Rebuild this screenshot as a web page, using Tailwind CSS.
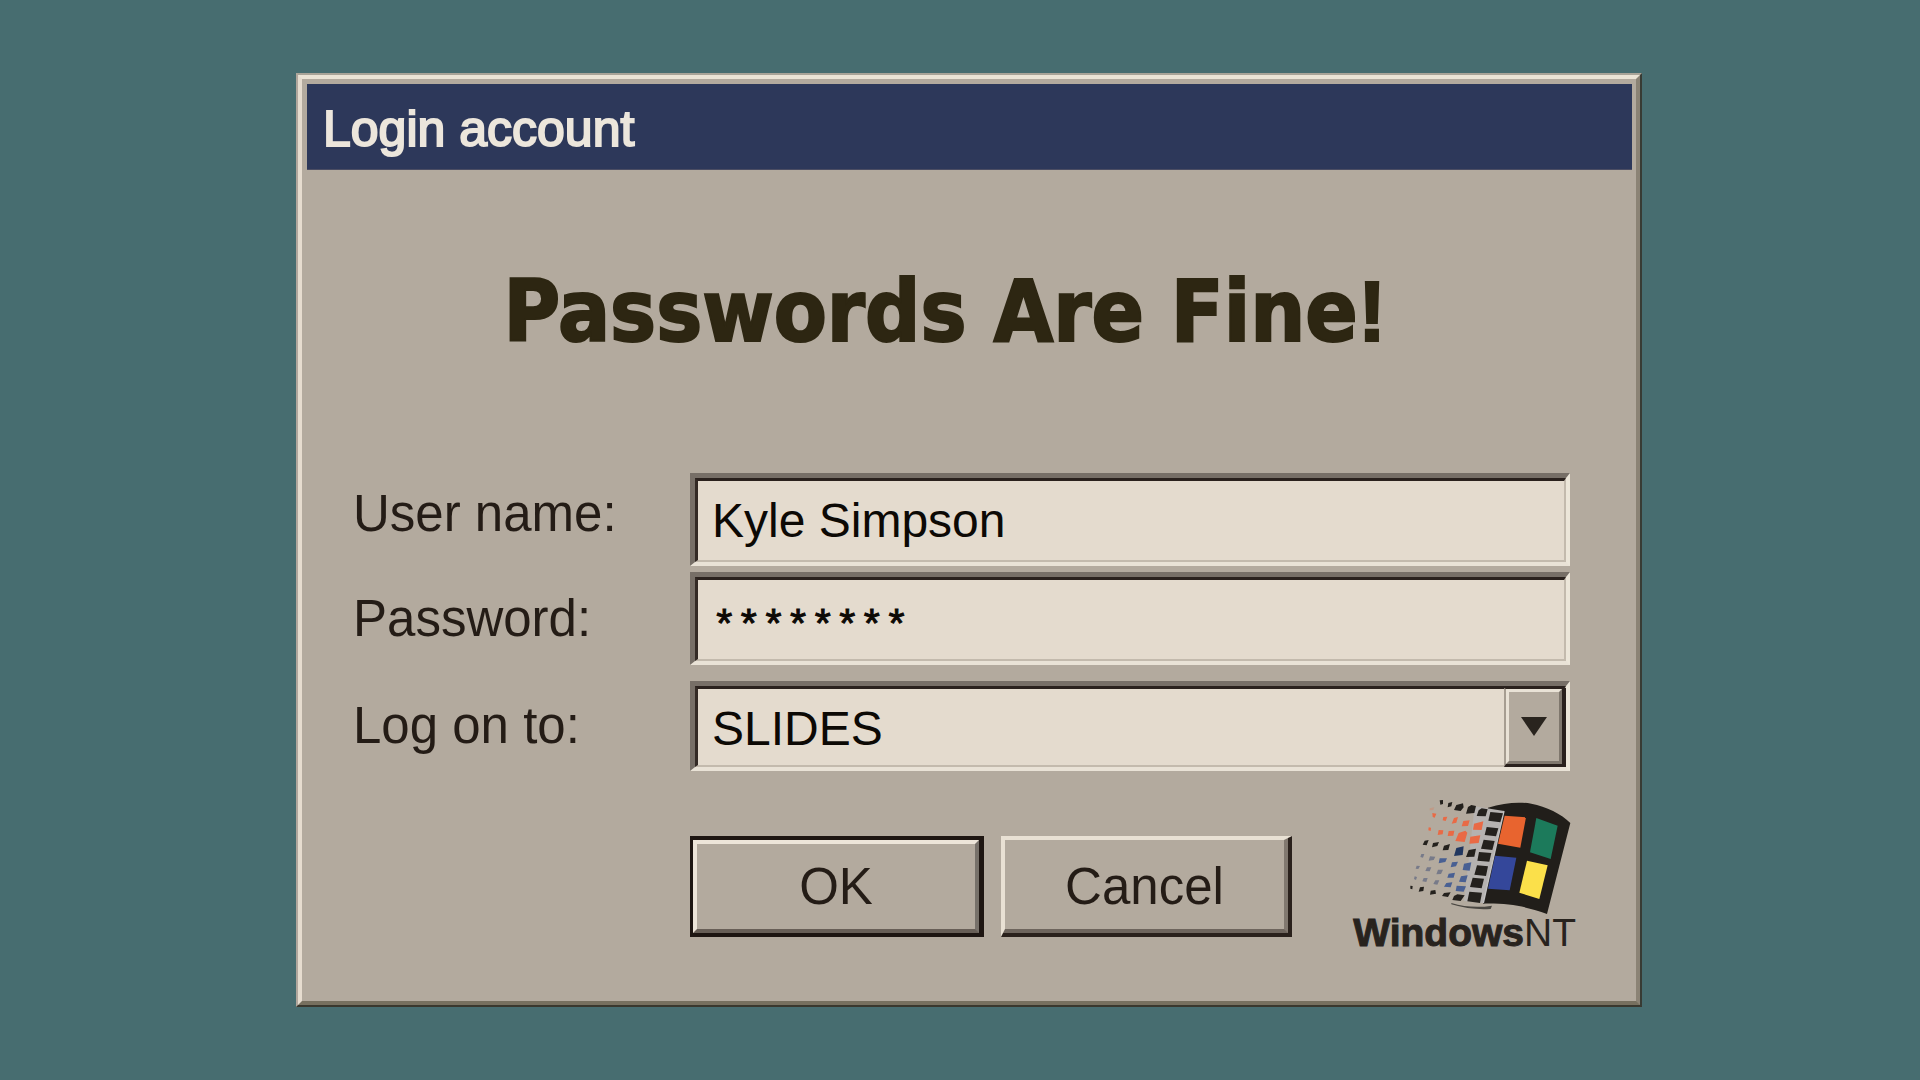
<!DOCTYPE html>
<html lang="en">
  <head>
    <meta charset="UTF-8" />
    <meta name="viewport" content="width=device-width, initial-scale=1.0" />
    <title>Login account</title>
    <script src="https://cdn.jsdelivr.net/npm/@tailwindcss/browser@4"></script>
  </head>
  <body
    class="min-h-screen flex items-center justify-center pl-[18px] bg-[#476d70] font-['Liberation_Sans',Arial,sans-serif] text-[51px] leading-[60px] text-[#241c16]"
  >
    <main
      class="w-full max-w-[1346px] border-2 border-t-[#a9a498] border-l-[#b1a79d] border-r-[#383b34] border-b-[#3a382e]"
    >
      <div
        class="bg-[#b3aa9e] border-4 border-t-[#ebe4d6] border-l-[#e6dccf] border-r-[#8b8375] border-b-[#77705f]"
      >
        <header
          class="mt-[5px] ml-[5px] mr-1 h-[86px] flex items-center pt-1 pl-4 bg-[#2d385a] border-b border-[#4b4d63]"
        >
          <h1 class="text-[50px] text-[#ece6dc] [-webkit-text-stroke:2px_#ece6dc]">Login account</h1>
        </header>

        <form class="pb-[50px]" onsubmit="return false">
          <h2
            class="mt-[97px] mr-[48px] text-center text-[86px] leading-[88px] font-bold text-[#2d2612] [-webkit-text-stroke:2px_#2d2612] font-['DejaVu_Sans_Condensed','DejaVu_Sans',sans-serif]"
          >
            Passwords Are Fine<span class="font-['Liberation_Sans',Arial,sans-serif]">!</span>
          </h2>

          <div class="mt-[118px] pl-[51px] pr-[66px]">
            <div class="flex items-center">
              <label for="username" class="w-[337px] pb-3">User name:</label>
              <div
                class="flex-1 h-[93px] flex border-t-5 border-l-5 border-r-4 border-b-4 border-t-[#776f67] border-l-[#776f67] border-r-[#ece6d9] border-b-[#e9e2d6]"
              >
                <input
                  type="text"
                  id="username"
                  value="Kyle Simpson"
                  class="w-full pl-[14px] text-5xl text-[#0c0905] bg-[#e4dbce] outline-none border-t-3 border-l-3 border-r-2 border-b-2 border-t-[#2a211d] border-l-[#332a25] border-r-[#c3baad] border-b-[#c3baad]"
                />
              </div>
            </div>

            <div class="mt-[6px] flex items-center">
              <label for="password" class="w-[337px]">Password:</label>
              <div
                class="flex-1 h-[93px] flex border-t-5 border-l-5 border-r-4 border-b-4 border-t-[#776f67] border-l-[#776f67] border-r-[#ece6d9] border-b-[#e9e2d6]"
              >
                <input
                  type="text"
                  id="password"
                  value="********"
                  autocomplete="off"
                  class="w-full pl-[14px] pt-4 font-['Liberation_Mono',monospace] text-[41px] text-[#0c0905] [-webkit-text-stroke:1px_#0c0905] bg-[#e4dbce] outline-none border-t-3 border-l-3 border-r-2 border-b-2 border-t-[#2a211d] border-l-[#332a25] border-r-[#c3baad] border-b-[#c3baad]"
                />
              </div>
            </div>

            <div class="mt-4 flex items-center">
              <label for="domain" class="w-[337px]">Log on to:</label>
              <div
                class="relative flex-1 h-[90px] flex border-t-5 border-l-5 border-r-4 border-b-4 border-t-[#776f67] border-l-[#776f67] border-r-[#ece6d9] border-b-[#e9e2d6]"
              >
                <select
                  id="domain"
                  class="w-full appearance-none pl-[14px] pt-1 text-5xl text-[#0c0905] bg-[#e4dbce] outline-none border-t-3 border-l-3 border-r-2 border-b-2 border-t-[#2a211d] border-l-[#332a25] border-r-[#c3baad] border-b-[#c3baad]"
                >
                  <option>SLIDES</option>
                </select>
                <span
                  class="pointer-events-none absolute top-[2px] right-0 bottom-0 w-[62px] border-t-1 border-l-2 border-r-4 border-b-3 border-t-[#2a211d] border-l-[#a69d91] border-r-[#2a211d] border-b-[#2a211d]"
                >
                  <span
                    class="flex h-full items-center justify-center bg-[#b3aa9e] border-3 border-t-[#e9e2d6] border-l-[#e9e2d6] border-r-[#7f776d] border-b-[#7f776d]"
                  >
                    <svg class="w-[26px] h-[19px]" viewBox="0 0 26 19" fill="#29241e">
                      <path d="M0 0h26L13 19z" />
                    </svg>
                  </span>
                </span>
              </div>
            </div>
          </div>

          <div class="flex justify-between pl-[388px] pr-[60px]">
            <div class="flex gap-[17px] pt-[65px]">
              <button
                type="submit"
                class="w-[294px] h-[101px] flex border-t-4 border-l-3 border-r-5 border-b-4 border-[#1e1612]"
              >
                <span
                  class="w-full h-full flex items-center justify-center border-4 border-t-[#ede5d9] border-l-[#ede5d9] border-r-[#77716a] border-b-[#685f57]"
                  >OK</span
                >
              </button>
              <button
                type="button"
                class="w-[291px] h-[101px] flex border-t-2 border-l-2 border-r-4 border-b-4 border-t-[#e9e1d4] border-l-[#e9e1d4] border-r-[#2a211c] border-b-[#2a211c]"
              >
                <span
                  class="w-full h-full flex items-center justify-center pt-1 border-t-2 border-l-2 border-r-4 border-b-4 border-t-[#e9e1d4] border-l-[#e9e1d4] border-r-[#81786f] border-b-[#6e655d]"
                  >Cancel</span
                >
              </button>
            </div>

            <div class="pt-[26px] flex flex-col items-end">
              <svg class="w-[168px] h-[118px]" viewBox="240 50 504 354">
                <path
                  d="M480 82C530 66 575 64 610 70C655 79 700 100 727 128L657 401C600 380 545 368 465 370Z"
                  fill="#211e1a"
                />
                <path d="M440 78L528 92L466 368L408 362Z" fill="#b5b2b0" />
                <path d="M528 92L466 368" stroke="#c3c2c2" stroke-width="4" />
                <path d="M370 368Q430 386 492 376L488 386Q430 390 370 372Z" fill="#4a4742" />
                <path d="M530 106L594 111L577 202L510 190Z" fill="#e8642f" />
                <path d="M625 113L689 136L668 236L606 216Z" fill="#1c7a5b" />
                <path d="M501 226L565 232L545 330L480 325Z" fill="#34479a" />
                <path d="M597 241L659 255L634 356L574 337Z" fill="#fbe04a" />
                <g fill="#24211d">
                  <path d="M335 60l10-1 0 12-8 2zM361 68l12-3-3 13-11 3zM385 74l20-5 2 12-9 11-20-3zM420 80l10-6 14 3-5 21-25 2zM452 90l9-6 18 3-6 21-27-1zM487 95l38 4-8 27-36-5z" />
                  <path d="M476 140l35 4-7 24-34-4zM467 178l33 4-7 27-34-4zM453 215l37 3-6 26-36-3zM447 255l33 3-6 29-35-4zM434 292l34 3-7 29-35-4zM424 334l38 3-6 31-38-5z" />
                  <path d="M290 181l12-2-6 16-12-2zM315 188l18-3-5 12-16 4zM348 196l18-5-5 18-17 1zM422 209l22-4-5 24-25 1z" />
                  <path d="M247 316l7 1-1 10-6-2zM276 321l12-2-2 13-14 2zM308 331l14-2 2 11-18 3zM348 338l20-2-8 14-18-3zM378 347l10-5 22 3-12 17-25-3z" />
                </g>
                <path d="M385 203l22-5-3 26-26 3z" fill="#22375f" />
                <g fill="#e96a45">
                  <path d="M313 98l12 2-5 12-6-2zM346 110l12-1-5 13-9-2zM378 113l12-3-5 17-14 3zM406 122l19-2-5 17-19 1zM438 130l28-7-5 26-26-1z" />
                  <path d="M302 141l7 1-1 10-7-2zM332 149l14 1-2 12-15 2zM362 152l17-1-3 15-17 1zM392 158l20-7 6 6-8 28-28-3zM427 169l30-4-5 23-28 2z" />
                  <path d="M305 84l14-3-3 8-11 1z" opacity=".25" />
                </g>
                <g fill="#496093">
                  <path d="M335 234l22 0-5 11-20 4zM372 246l18-2-6 14-16 3zM408 250l22-4-5 25-21-2zM362 280l19-3-4 15-19 0zM399 288l20-3-6 21-20-2zM355 308l18-2-5 15-20-2zM386 316l28 2-7 16-24-2z" />
                </g>
                <g fill="#777a89">
                  <path d="M280 221l9 0-4 11-8-2zM306 228l16 1-5 10-15 2zM266 256l10 1-5 9-8-1zM297 261l13 0-5 12-13-1zM330 268l15 0-6 13-14 1zM260 288l7 2-3 9-6-3zM287 293l12 0-4 12-12-2zM322 300l12 0-6 13-12-2z" />
                </g>
              </svg>
              <p class="text-[39px] leading-9 text-[#28231e]">
                <strong class="font-bold [-webkit-text-stroke:1px_#28231e]">Windows</strong>NT
              </p>
            </div>
          </div>
        </form>
      </div>
    </main>
  </body>
</html>
